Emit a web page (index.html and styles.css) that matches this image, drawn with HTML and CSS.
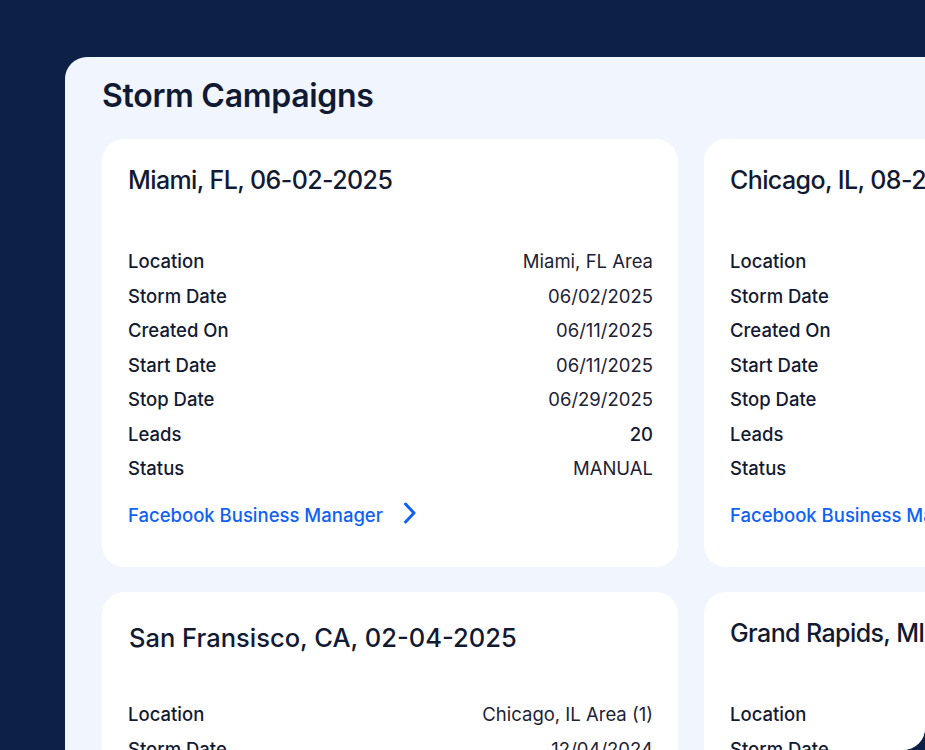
FILE: index.html
```html
<!DOCTYPE html>
<html lang="en">
<head>
  <meta charset="UTF-8">
  <meta name="viewport" content="width=device-width, initial-scale=1.0">
  <title>Storm Campaigns</title>
  <link rel="stylesheet" href="styles.css">
</head>
<body>
  <div class="panel">
    <h1>Storm Campaigns</h1>

    <div class="campaign-grid">
      <!-- Miami -->
      <div class="campaign-card">
        <h2>Miami, FL, 06-02-2025</h2>
        <dl class="details">
          <div class="row"><dt>Location</dt><dd>Miami, FL Area</dd></div>
          <div class="row"><dt>Storm Date</dt><dd>06/02/2025</dd></div>
          <div class="row"><dt>Created On</dt><dd>06/11/2025</dd></div>
          <div class="row"><dt>Start Date</dt><dd>06/11/2025</dd></div>
          <div class="row"><dt>Stop Date</dt><dd>06/29/2025</dd></div>
          <div class="row"><dt>Leads</dt><dd class="strong">20</dd></div>
          <div class="row"><dt>Status</dt><dd>MANUAL</dd></div>
        </dl>
        <a class="fb-link" href="#">
          Facebook Business Manager
          <svg width="14" height="22" viewBox="0 0 14 22" aria-hidden="true">
            <path d="M2.5 2 L11 11 L2.5 20" fill="none" stroke="currentColor" stroke-width="3" stroke-linecap="round" stroke-linejoin="round"/>
          </svg>
        </a>
      </div>

      <!-- Chicago -->
      <div class="campaign-card">
        <h2>Chicago, IL, 08-21-2025</h2>
        <dl class="details">
          <div class="row"><dt>Location</dt><dd>Chicago, IL Area</dd></div>
          <div class="row"><dt>Storm Date</dt><dd>08/21/2025</dd></div>
          <div class="row"><dt>Created On</dt><dd>08/22/2025</dd></div>
          <div class="row"><dt>Start Date</dt><dd>08/22/2025</dd></div>
          <div class="row"><dt>Stop Date</dt><dd>09/10/2025</dd></div>
          <div class="row"><dt>Leads</dt><dd class="strong">12</dd></div>
          <div class="row"><dt>Status</dt><dd>MANUAL</dd></div>
        </dl>
        <a class="fb-link" href="#">
          Facebook Business Manager
          <svg width="14" height="22" viewBox="0 0 14 22" aria-hidden="true">
            <path d="M2.5 2 L11 11 L2.5 20" fill="none" stroke="currentColor" stroke-width="3" stroke-linecap="round" stroke-linejoin="round"/>
          </svg>
        </a>
      </div>

      <!-- San Fransisco -->
      <div class="campaign-card">
        <h2 class="lower">San Fransisco, CA, 02-04-2025</h2>
        <dl class="details">
          <div class="row"><dt>Location</dt><dd>Chicago, IL Area (1)</dd></div>
          <div class="row"><dt>Storm Date</dt><dd>12/04/2024</dd></div>
          <div class="row"><dt>Created On</dt><dd>12/05/2024</dd></div>
          <div class="row"><dt>Start Date</dt><dd>12/05/2024</dd></div>
        </dl>
      </div>

      <!-- Grand Rapids -->
      <div class="campaign-card">
        <h2>Grand Rapids, MI, 05-15-2025</h2>
        <dl class="details">
          <div class="row"><dt>Location</dt><dd>Grand Rapids, MI Area</dd></div>
          <div class="row"><dt>Storm Date</dt><dd>05/15/2025</dd></div>
          <div class="row"><dt>Created On</dt><dd>05/16/2025</dd></div>
        </dl>
      </div>
    </div>
  </div>
</body>
</html>
```

FILE: styles.css
```css
html, body {
  margin: 0;
  padding: 0;
  height: 100%;
}

body {
  font-family: Inter, "Noto Sans", sans-serif;
  background-color: #0d2147;
  color: #121a33;
  overflow: hidden;
}

/* main white-blue panel, runs off the right edge */
.panel {
  box-sizing: border-box;
  margin: 57px 0 0 65px;
  height: 693px;
  padding: 20px 0 0 37px;
  background: #f1f5fd;
  border-radius: 22px 0 22px 0;
  overflow: hidden;
}

.panel h1 {
  margin: 0 0 24px;
  font-size: 32px;
  line-height: 38px;
  font-weight: 600;
  letter-spacing: -0.3px;
  color: #111a33;
}

.campaign-grid {
  display: grid;
  grid-template-columns: 576px 576px;
  column-gap: 26px;
  row-gap: 25px;
}

.campaign-card {
  background: #ffffff;
  border-radius: 22px;
  padding: 25px 25px 34px 26px;
  height: 428px;
  box-sizing: border-box;
}

.campaign-card h2 {
  margin: 0 0 48px;
  font-size: 25px;
  line-height: 32px;
  font-weight: 500;
  letter-spacing: -0.6px;
  color: #121a33;
}

.campaign-card h2.lower {
  padding-top: 5px;
  margin-bottom: 43px;
  padding-left: 1px;
  font-size: 25.5px;
  letter-spacing: 0;
}

.details {
  margin: 0;
}

.row {
  display: flex;
  justify-content: space-between;
  align-items: center;
  height: 34.5px;
  font-size: 18.5px;
  letter-spacing: 0;
}

.row dt {
  font-weight: 500;
}

.row dd {
  margin: 0;
  font-weight: 400;
  color: #1c2236;
}

.row dd.strong {
  font-weight: 500;
  color: #121a33;
}

.fb-link {
  display: inline-flex;
  align-items: center;
  gap: 20px;
  margin-top: 12px;
  height: 34px;
  font-size: 18.5px;
  font-weight: 500;
  color: #0f62f5;
  text-decoration: none;
}

.fb-link svg {
  margin-top: -4px;
}
```
